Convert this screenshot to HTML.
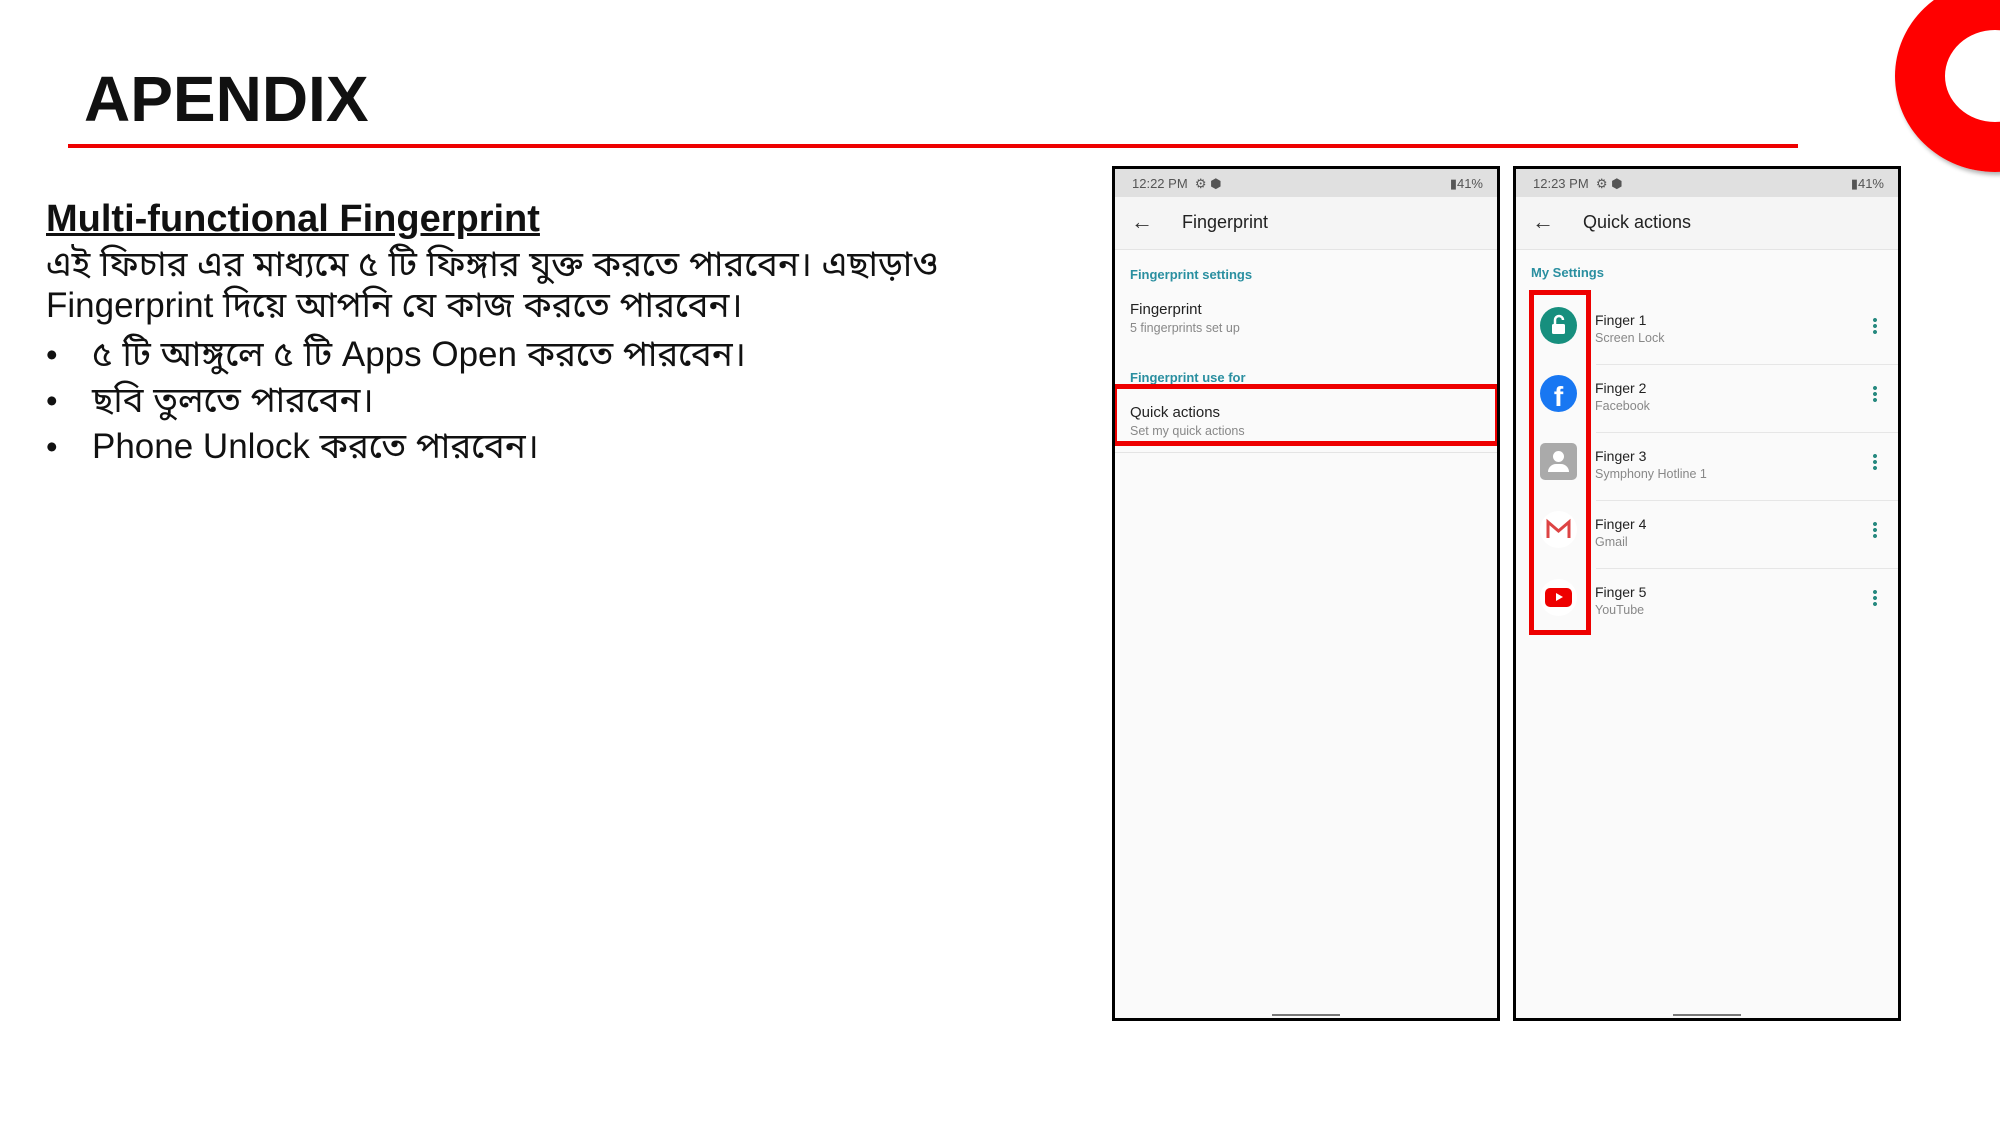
<!DOCTYPE html>
<html><head><meta charset="utf-8"><style>
*{margin:0;padding:0;box-sizing:border-box}
body{width:2000px;height:1125px;background:#fff;position:relative;overflow:hidden;font-family:"Liberation Sans","Noto Sans Bengali",sans-serif}
.a{position:absolute;white-space:nowrap}
.ph{position:absolute;border:3px solid #000;background:#fafafa;overflow:hidden}
.sb{position:absolute;left:0;right:0;top:0;height:28px;background:#e0e0e0;font-size:13px;color:#555}
.ab{position:absolute;left:0;right:0;top:28px;height:53px;background:#f5f5f5;border-bottom:1px solid #e4e4e4}
.hd{color:#2a8fa0;font-size:13px;font-weight:bold}
.t{font-size:15px;color:#222}
.s{font-size:12.5px;color:#888}
.dots{position:absolute;width:4px;height:18px;background:radial-gradient(circle,#26897f 1.8px,transparent 2.2px) 0 0/4px 6px repeat-y}
.ic{position:absolute;width:37px;height:37px;border-radius:50%}
.dv{position:absolute;left:80px;right:0;height:1px;background:#e6e6e6}
</style></head><body>
<div class="a" style="left:84px;top:62px;font-size:64px;font-weight:bold;color:#111">APENDIX</div>
<div class="a" style="left:68px;top:144px;width:1730px;height:4px;background:#e00"></div>
<div class="a" style="left:1895px;top:-20px;width:200px;height:192px;border-radius:50%;border:50px solid #f00;box-shadow:2px 3px 4px rgba(0,0,0,.3)"></div>

<div class="a" style="left:46px;top:198px;font-size:38px;font-weight:bold;text-decoration:underline;color:#111">Multi-functional Fingerprint</div>
<div class="a" style="left:46px;top:244px;font-size:35px;color:#111;line-height:41px">এই ফিচার এর মাধ্যমে ৫ টি ফিঙ্গার যুক্ত করতে পারবেন। এছাড়াও<br>Fingerprint দিয়ে আপনি যে কাজ করতে পারবেন।</div>
<div class="a" style="left:46px;top:332px;font-size:33px;color:#111;line-height:46px">•<br>•<br>•</div>
<div class="a" style="left:92px;top:332px;font-size:35px;color:#111;line-height:46px">৫ টি আঙ্গুলে ৫ টি Apps Open করতে পারবেন।<br>ছবি তুলতে পারবেন।<br>Phone Unlock করতে পারবেন।</div>

<div class="ph" style="left:1112px;top:166px;width:388px;height:855px">
 <div class="sb"><span class="a" style="left:17px;top:7px">12:22 PM &nbsp;⚙ ⬢</span><span class="a" style="right:14px;top:7px">▮41%</span></div>
 <div class="ab"><span class="a" style="left:16px;top:12px;font-size:22px;color:#333">←</span><span class="a" style="left:67px;top:15px;font-size:18px;color:#222">Fingerprint</span></div>
 <div class="a hd" style="left:15px;top:98px">Fingerprint settings</div>
 <div class="a t" style="left:15px;top:132px">Fingerprint</div>
 <div class="a s" style="left:15px;top:152px">5 fingerprints set up</div>
 <div class="a hd" style="left:15px;top:201px">Fingerprint use for</div>
 <div class="a" style="left:-3px;top:215px;width:388px;height:62px;border:5px solid #e00"></div>
 <div class="a t" style="left:15px;top:235px">Quick actions</div>
 <div class="a s" style="left:15px;top:255px">Set my quick actions</div>
 <div class="a" style="left:0;right:0;top:283px;height:1px;background:#e4e4e4"></div>
 <div class="a" style="left:157px;top:845px;width:68px;height:2px;background:#777"></div>
</div>

<div class="ph" style="left:1513px;top:166px;width:388px;height:855px">
 <div class="sb"><span class="a" style="left:17px;top:7px">12:23 PM &nbsp;⚙ ⬢</span><span class="a" style="right:14px;top:7px">▮41%</span></div>
 <div class="ab"><span class="a" style="left:16px;top:12px;font-size:22px;color:#333">←</span><span class="a" style="left:67px;top:15px;font-size:18px;color:#222">Quick actions</span></div>
 <div class="a hd" style="left:15px;top:96px">My Settings</div>
 <div class="a" style="left:13px;top:121px;width:62px;height:345px;border:5px solid #e00"></div>

 <div class="ic" style="left:24px;top:138px;background:#178f7e"><svg width="37" height="37" viewBox="0 0 37 37"><path d="M15 17v-4a4 4 0 0 1 8 0" fill="none" stroke="#fff" stroke-width="2.5"/><rect x="12" y="17" width="13" height="10" rx="1.5" fill="#fff"/></svg></div>
 <div class="ic" style="left:24px;top:206px;background:#1877f2;color:#fff;text-align:center;font-size:28px;font-weight:bold;line-height:44px">f</div>
 <div class="ic" style="left:24px;top:274px;background:#aaa;border-radius:5px"><div class="a" style="left:13px;top:8px;width:11px;height:11px;border-radius:50%;background:#fff"></div><div class="a" style="left:8px;top:21px;width:21px;height:8px;border-radius:8px 8px 0 0;background:#fff"></div></div>
 <div class="ic" style="left:24px;top:342px;background:#fff"><svg width="37" height="37" viewBox="0 0 37 37"><path d="M8 27V11l10.5 9L29 11v16" fill="none" stroke="#d44" stroke-width="3"/></svg></div>
 <div class="ic" style="left:24px;top:410px;background:#fff"><div class="a" style="left:5px;top:9px;width:27px;height:19px;border-radius:5px;background:#e00"></div><div class="a" style="left:16px;top:14px;border-left:7px solid #fff;border-top:4.5px solid transparent;border-bottom:4.5px solid transparent"></div></div>

 <div class="a t" style="left:79px;top:143px;font-size:14px">Finger 1</div><div class="a s" style="left:79px;top:162px">Screen Lock</div>
 <div class="a t" style="left:79px;top:211px;font-size:14px">Finger 2</div><div class="a s" style="left:79px;top:230px">Facebook</div>
 <div class="a t" style="left:79px;top:279px;font-size:14px">Finger 3</div><div class="a s" style="left:79px;top:298px">Symphony Hotline 1</div>
 <div class="a t" style="left:79px;top:347px;font-size:14px">Finger 4</div><div class="a s" style="left:79px;top:366px">Gmail</div>
 <div class="a t" style="left:79px;top:415px;font-size:14px">Finger 5</div><div class="a s" style="left:79px;top:434px">YouTube</div>
 <div class="dots" style="left:357px;top:148px"></div><div class="dots" style="left:357px;top:216px"></div><div class="dots" style="left:357px;top:284px"></div><div class="dots" style="left:357px;top:352px"></div><div class="dots" style="left:357px;top:420px"></div>
 <div class="dv" style="top:195px"></div><div class="dv" style="top:263px"></div><div class="dv" style="top:331px"></div><div class="dv" style="top:399px"></div>
 <div class="a" style="left:157px;top:845px;width:68px;height:2px;background:#777"></div>
</div>
</body></html>
